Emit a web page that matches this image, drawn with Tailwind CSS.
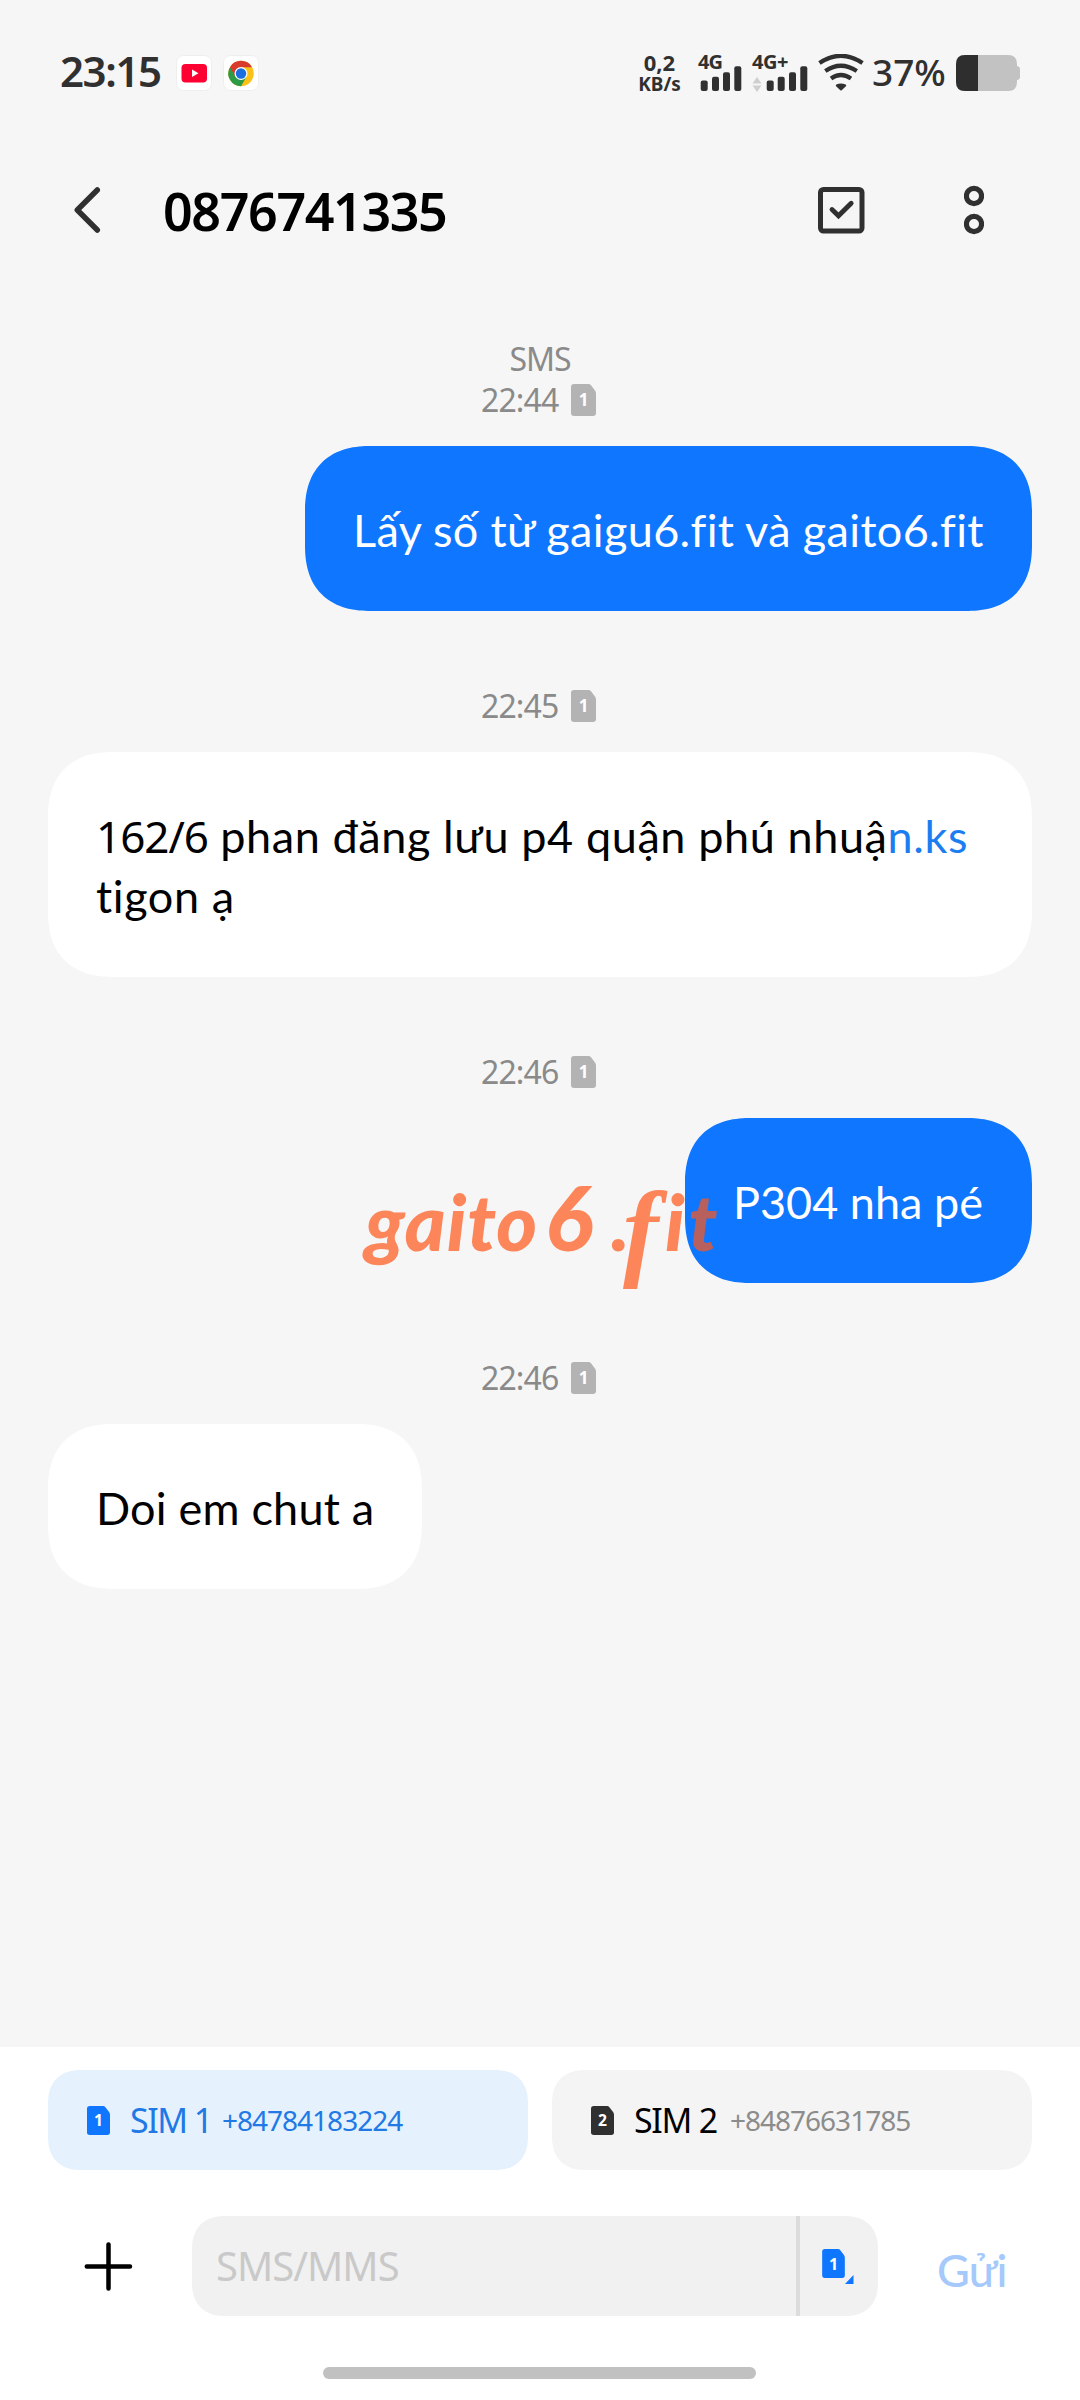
<!DOCTYPE html>
<html lang="vi">
<head>
<meta charset="utf-8">
<title>0876741335</title>
<script src="https://cdn.jsdelivr.net/npm/@tailwindcss/browser@4"></script>
</head>
<body class="relative flex h-[2400px] w-[1080px] flex-col overflow-hidden bg-[#f6f6f6] font-['Noto_Sans',sans-serif] [font-variant-ligatures:none]">

<!-- shared SIM card shape -->
<svg class="hidden">
  <symbol id="sim" viewBox="0 0 25 32"><path d="M3 0H17.5Q19 0 20 1.3L24 6.5Q25 7.8 25 9.500V29Q25 32 22 32H3Q0 32 0 29V3Q0 0 3 0Z"/></symbol>
</svg>

<!-- status bar -->
<div class="flex h-[147px] w-full shrink-0 text-[#303030]">
  <div class="flex w-[637px] items-start pt-[55px] pl-[60px]">
    <span class="mt-[-7px] w-[116px] text-[42px] leading-[46px] font-semibold tracking-[-1.4px]">23:15</span>
    <svg class="size-9" viewBox="0 0 36 36"><rect x=".5" y=".5" width="35" height="35" rx="7" fill="#fff" stroke="#eee"/><rect x="5.500" y="9" width="25.500" height="18.500" rx="4" fill="#ff0033"/><path d="M16 14.500V22L22.500 18.200Z" fill="#fff"/></svg>
    <svg class="ml-[11px] size-9" viewBox="0 0 36 36"><rect x=".5" y=".5" width="35" height="35" rx="7" fill="#fff" stroke="#eee"/>
      <circle cx="18" cy="18.500" r="12.700" fill="#fbc116"/>
      <path d="M18 18.500 7 12.150A12.700 12.700 0 0 0 18 31.200L23.500 21.700Z" fill="#2c9a46"/>
      <path d="M7 12.150A12.700 12.700 0 0 1 29 12.150H18L12.500 21.700Z" fill="#d93a2e"/>
      <circle cx="18" cy="18.500" r="6.500" fill="#fff"/><circle cx="18" cy="18.500" r="5.200" fill="#1a6fe0"/></svg>
  </div>
  <div class="mt-[51px] flex w-[45px] flex-col items-center font-bold">
    <span class="text-[22px] leading-[23px]">0,2</span>
    <span class="text-[19px] leading-[20px]">KB/s</span>
  </div>
  <div class="mt-[52px] ml-[16px] w-[54px]">
    <div class="h-[14px] text-[20px] leading-[19px] font-bold tracking-[-1px]">4G</div>
    <svg class="h-[26px] w-[54px]" viewBox="0 0 54 26" fill="#303030"><rect x="2.700" y="14.500" width="7" height="10.500" rx="2"/><rect x="14" y="10.700" width="7" height="14.300" rx="2"/><rect x="25" y="6.300" width="7" height="18.700" rx="2"/><rect x="36.300" y=".3" width="7" height="24.700" rx="2"/></svg>
  </div>
  <div class="mt-[52px] w-[66px]">
    <div class="h-[14px] text-[20px] leading-[19px] font-bold tracking-[-.4px]">4G+</div>
    <svg class="h-[26px] w-[66px]" viewBox="0 0 66 26" fill="#303030"><path d="M.5 17.500 5 11 9.500 17.500ZM.5 19.500H9.500L5 26Z" fill="#cfcfcf"/><rect x="14.700" y="14.500" width="7" height="10.500" rx="2"/><rect x="25.700" y="10.700" width="7" height="14.300" rx="2"/><rect x="37" y="6.300" width="7" height="18.700" rx="2"/><rect x="48.300" y=".3" width="7" height="24.700" rx="2"/></svg>
  </div>
  <svg class="mt-[54px] h-[38px] w-[46px]" viewBox="0 0 46 38" fill="none" stroke="#303030" stroke-width="4.200"><path d="M1.500 9Q22.800-5.500 44.500 9M7.300 17Q22.800 6.500 38.800 17M13 24.500Q22.800 17.500 33 24.500"/><path d="M18.800 31.500Q22.800 29.500 27.200 31.500L23 35.500Z" fill="#303030" stroke-width="2" stroke-linejoin="round"/></svg>
  <span class="mt-[52px] ml-[8px] w-[84px] text-[37px] leading-[40px] font-medium">37%</span>
  <svg class="mt-[55px] h-9 w-16" viewBox="0 0 64 36"><path d="M9 0H52Q61 0 61 9V11Q64 11.500 64 14V22Q64 24.500 61 25V27Q61 36 52 36H9Q0 36 0 27V9Q0 0 9 0Z" fill="#c2c2c2"/><path d="M22 0H9Q0 0 0 9V27Q0 36 9 36H22Z" fill="#2e2e2e"/></svg>
</div>

<!-- conversation header -->
<div class="flex h-[126px] shrink-0 items-center">
  <svg class="ml-[70px] h-[50px] w-9" viewBox="0 0 36 50" fill="none" stroke="#303030" stroke-width="5.500" stroke-linecap="round" stroke-linejoin="round"><path d="M27.300 5 7.300 25 27.300 45"/></svg>
  <h1 class="mt-[2px] ml-[57px] w-[655px] text-[52px] leading-[70px] font-semibold tracking-[-1.4px] text-black">0876741335</h1>
  <svg class="h-[47px] w-[47px]" viewBox="0 0 47 47" fill="none" stroke="#303030" stroke-width="5"><rect x="2.500" y="2.500" width="41.500" height="41.500" rx="3"/><path d="M14 22.500 20.500 28.800 33.200 16.200" stroke-width="4.800" stroke-linecap="round"/></svg>
  <svg class="ml-[99px] h-[50px] w-[20px]" viewBox="0 0 20 50" fill="none" stroke="#303030" stroke-width="5.200"><circle cx="10" cy="11" r="7.600"/><circle cx="10" cy="39" r="7.600"/></svg>
</div>

<!-- messages -->
<main class="flex h-[1774px] shrink-0 flex-col px-12 pt-[66px] text-[45px] leading-[60px]">
  <div class="h-[41px] text-center text-[32px] leading-[40px] tracking-[-1px] text-[#8a8a8a]">SMS</div>
  <div class="mb-[26px] flex h-10 items-center pl-[433px] text-[32px] leading-10 text-[#8a8a8a]">
    <span class="w-[90px] tracking-[-.9px]">22:44</span>
    <svg class="h-8 w-[25px] fill-[#b3b3b3]" viewBox="0 0 25 32"><use href="#sim"/><text x="12.500" y="22" text-anchor="middle" font-size="17" font-weight="700" fill="#fff">1</text></svg>
  </div>
  <div class="h-[165px] w-[727px] self-end rounded-[66px] bg-[#0f76ff] px-12 pt-[54px] font-['Lato',sans-serif] tracking-[.35px] whitespace-nowrap text-white [corner-shape:superellipse(1.25)]">Lấy số từ gaigu6.fit và gaito6.fit</div>

  <div class="mt-[75px] mb-[26px] flex h-10 items-center pl-[433px] text-[32px] leading-10 text-[#8a8a8a]">
    <span class="w-[90px] tracking-[-.9px]">22:45</span>
    <svg class="h-8 w-[25px] fill-[#b3b3b3]" viewBox="0 0 25 32"><use href="#sim"/><text x="12.500" y="22" text-anchor="middle" font-size="17" font-weight="700" fill="#fff">1</text></svg>
  </div>
  <div class="h-[225px] rounded-[66px] bg-white px-12 pt-[54px] font-['Lato',sans-serif] tracking-[.6px] whitespace-nowrap text-black [corner-shape:superellipse(1.25)]"><span class="font-['Noto_Sans',sans-serif] text-[44px] tracking-[-1px]">162/6</span> phan đăng lưu p4 quận phú nhuậ<span class="text-[#1c7df0]">n.ks</span><br>tigon ạ</div>

  <div class="mt-[75px] mb-[26px] flex h-10 items-center pl-[433px] text-[32px] leading-10 text-[#8a8a8a]">
    <span class="w-[90px] tracking-[-.9px]">22:46</span>
    <svg class="h-8 w-[25px] fill-[#b3b3b3]" viewBox="0 0 25 32"><use href="#sim"/><text x="12.500" y="22" text-anchor="middle" font-size="17" font-weight="700" fill="#fff">1</text></svg>
  </div>
  <div class="h-[165px] w-[347px] self-end rounded-[66px] bg-[#0f76ff] px-12 pt-[54px] font-['Lato',sans-serif] whitespace-nowrap text-white [corner-shape:superellipse(1.25)]">P304 nha pé</div>

  <div class="mt-[75px] mb-[26px] flex h-10 items-center pl-[433px] text-[32px] leading-10 text-[#8a8a8a]">
    <span class="w-[90px] tracking-[-.9px]">22:46</span>
    <svg class="h-8 w-[25px] fill-[#b3b3b3]" viewBox="0 0 25 32"><use href="#sim"/><text x="12.500" y="22" text-anchor="middle" font-size="17" font-weight="700" fill="#fff">1</text></svg>
  </div>
  <div class="h-[165px] w-[374px] rounded-[66px] bg-white px-12 pt-[54px] font-['Lato',sans-serif] tracking-[.2px] whitespace-nowrap text-black [corner-shape:superellipse(1.25)]">Doi em chut a</div>
</main>

<!-- composer -->
<footer class="flex h-[353px] shrink-0 flex-col bg-white pt-[23px]">
  <div class="flex gap-6 px-12">
    <div class="flex h-[100px] w-[480px] items-center rounded-[34px] bg-[#e5f1fd] pl-[39px] text-[#2179e6] [corner-shape:superellipse(1.25)]">
      <svg class="h-[29px] w-[23px] fill-[#0f76ff]" viewBox="0 0 25 32" preserveAspectRatio="none"><use href="#sim"/><text x="12.500" y="22" text-anchor="middle" font-size="17" font-weight="700" fill="#fff">1</text></svg>
      <span class="ml-[20px] w-[92px] text-[34px] leading-[50px] tracking-[-1.500px]">SIM 1</span>
      <span class="text-[28px] leading-[50px] tracking-[-1px]">+84784183224</span>
    </div>
    <div class="flex h-[100px] w-[480px] items-center rounded-[34px] bg-[#f4f4f4] pl-[39px] text-[#8c8c8c] [corner-shape:superellipse(1.25)]">
      <svg class="h-[29px] w-[23px] fill-[#303030]" viewBox="0 0 25 32" preserveAspectRatio="none"><use href="#sim"/><text x="12.500" y="22" text-anchor="middle" font-size="17" font-weight="700" fill="#fff">2</text></svg>
      <span class="ml-[20px] w-[96px] text-[34px] leading-[50px] tracking-[-1.300px] text-black">SIM 2</span>
      <span class="text-[28px] leading-[50px] tracking-[-1px]">+84876631785</span>
    </div>
  </div>
  <div class="mt-[46px] flex h-[100px] items-center">
    <svg class="ml-[84px] size-[49px]" viewBox="0 0 49 49" stroke="#000" stroke-width="4.500" stroke-linecap="round"><path d="M24.500 2.500V46.500M2.800 24.500H46"/></svg>
    <div class="ml-[59px] flex h-[100px] w-[686px] items-center rounded-[34px] bg-[#f1f1f1] [corner-shape:superellipse(1.25)]">
      <span class="w-[604px] pl-6 text-[40px] leading-[50px] tracking-[-1px] text-[#c9c9c9]">SMS/MMS</span>
      <span class="h-full w-1 bg-[#dcdcdc]"></span>
      <svg class="ml-[22px] h-[35px] w-[32px]" viewBox="0 0 32 35" fill="#0f76ff"><use href="#sim" width="23" height="29"/><text x="11.500" y="20.500" text-anchor="middle" font-size="16" font-weight="700" fill="#fff">1</text><path d="M31.500 26V35H23Z"/></svg>
    </div>
    <span class="mt-[8px] ml-[59px] font-['Lato',sans-serif] text-[45px] leading-[60px] font-medium tracking-[-.8px] text-[#a5c9fb]">Gửi</span>
  </div>
  <div class="mt-[51px] ml-[323px] h-[12px] w-[433px] rounded-full bg-[#c1c1c1]"></div>
</footer>

<!-- watermark lies over the chat -->
<div class="absolute top-[1145px] left-[365px] flex items-baseline font-['Lato',sans-serif] leading-[140px] font-black whitespace-nowrap text-[#ff5719] italic opacity-70">
  <span class="w-[180px] text-[78px] tracking-[1px]">gaito</span>
  <span class="w-[66px] text-[90px]">6</span>
  <span class="w-[12px] text-[78px]">.</span>
  <span class="w-[42px] translate-y-[15px] font-['Liberation_Serif',serif] text-[107px] font-bold">f</span>
  <span class="text-[78px] tracking-[4px]">it</span>
</div>
</body>
</html>
